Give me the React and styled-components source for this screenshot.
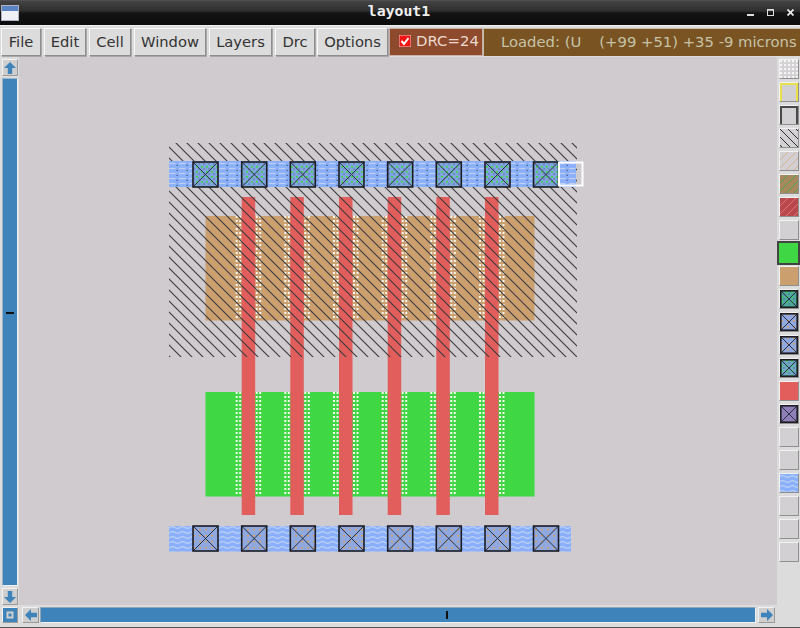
import React from "react";
import styled, { createGlobalStyle } from "styled-components";

const Global = createGlobalStyle`
  html, body { margin: 0; padding: 0; background: #dcdcdc; overflow: hidden; }
  #root { width: 800px; height: 628px; }
`;

const Win = styled.div`
  width: 800px; height: 628px; display: flex; flex-direction: column;
  background: #dcdcdc; font-family: "DejaVu Sans", sans-serif; overflow: hidden;
`;
const TitleBar = styled.div`
  height: 26px; flex: none; display: flex; align-items: center; position: relative;
  background: linear-gradient(#5a5a5a 0, #444 1px, #2e2e2e 11px, #141414 13px, #0c0c0c 25px, #f0f0f0 25px);
  padding-bottom: 1px; box-sizing: border-box;
`;
const AppIcon = styled.svg`width: 18px; height: 16px; margin-left: 1px; flex: none;`;
const TitleText = styled.div`
  position: absolute; left: 0; right: 2px; top: 2px; text-align: center; color: #efefef;
  font: bold 14.8px "DejaVu Sans Mono", monospace;
`;
const WinButtons = styled.div`
  margin-left: auto; display: flex; align-items: center; gap: 13px; padding-right: 6px;
`;
const WinIcon = styled.svg`width: 7px; height: 7px; display: block;`;
const MenuBar = styled.div`
  height: 31px; flex: none; display: flex; align-items: stretch; box-sizing: border-box;
  padding: 2px 0 1px 1px; background: #dcdcdc;
`;
const MenuButton = styled.div`
  width: ${p => p.$w}px; margin-right: ${p => p.$gap}px; box-sizing: border-box; padding-bottom: 2px;
  display: flex; align-items: center; justify-content: center;
  background: #dcdcdc; color: #333; font-size: 14.7px; white-space: pre;
  border: 1px solid; border-color: #f8f8f8 #8e8e8e #8e8e8e #f8f8f8;
  box-shadow: 1px 1px 0 #a8a8a8;
`;
const DrcBox = styled.div`
  width: 94px; margin-left: 1px; box-sizing: border-box; display: flex; align-items: center; padding: 0 0 2px 9px; gap: 5px;
  background: #8d4a2d; color: #ecd9cf; font-size: 14.9px; border: 1px solid #c9b0a6;
`;
const Check = styled.svg`width: 12px; height: 12px; flex: none;`;
const StatusBox = styled.div`
  flex: 1; box-sizing: border-box; display: flex; align-items: center; padding: 0 0 2px 17px;
  background: #7a5323; color: #c6c3a8; font-size: 14.8px; white-space: pre; border-top: 1px solid #c7bca8; border-left: 1px solid #c7bca8;
`;
const StatusGap = styled.span`width: 18px; flex: none;`;
const Main = styled.div`flex: 1; display: flex; min-height: 0;`;
const VScroll = styled.div`
  width: 19px; flex: none; display: flex; flex-direction: column; align-items: center; padding: 2px 0 0; box-sizing: border-box; gap: 2px; background: #dcdcdc;
`;
const ArrowBtn = styled.div`
  width: 16px; height: 17px; flex: none; background: #cfcfcf; display: flex; align-items: center; justify-content: center;
  border: 1px solid; border-color: #f2f2f2 #9a9a9a #9a9a9a #f2f2f2; box-sizing: border-box;
`;
const ArrowSvg = styled.svg`width: 14px; height: 14px; display: block;`;
const VTrough = styled.div`
  width: 16px; flex: 1; background: #3e83ba; position: relative; border: 1px solid; border-color: #9ab6cc #f0f0f0 #f0f0f0 #9ab6cc; box-sizing: border-box;
`;
const VMark = styled.div`position: absolute; left: 3px; right: 3px; top: 233px; height: 2px; background: #111;`;
const Canvas = styled.div`flex: 1; background: #cfcbcf; min-width: 0;`;
const CanvasSvg = styled.svg`display: block; width: 758px; height: 548px;`;
const ToolCol = styled.div`
  width: 23px; flex: none; display: flex; flex-direction: column; align-items: center; padding-top: 2px; gap: 3px; background: #dcdcdc; box-sizing: border-box;
`;
const Swatch = styled.div`
  width: ${p => p.$sel ? 23 : 20}px; height: ${p => p.$sel ? 24 : 20}px; flex: none; box-sizing: border-box;
  margin: ${p => p.$sel ? "-2px 0" : "0"};
  background: #d2d0d2; border: ${p => p.$sel ? "2px solid #444" : "1px solid"};
  border-color: ${p => p.$sel ? "#444" : "#f2f2f2 #8f8f8f #8f8f8f #f2f2f2"};
  z-index: ${p => p.$sel ? 1 : 0};
`;
const SwatchSvg = styled.svg`display: block; width: 100%; height: 100%;`;
const BottomBar = styled.div`
  height: 23px; flex: none; display: flex; align-items: center; padding: 1px 0 3px 2px; box-sizing: border-box; background: #dcdcdc; border-bottom: 1px solid #555;
`;
const CornerBtn = styled(ArrowBtn)`width: 16px; height: 16px; margin-right: 4px;`;
const HArrow = styled(ArrowBtn)`width: 17px; height: 16px;`;
const HTrough = styled.div`
  width: 716px; height: 16px; margin: 0 2px 0 1px; box-sizing: border-box; background: #3e83ba; position: relative;
  border: 1px solid; border-color: #8fa6b8 #f0f0f0 #f0f0f0 #8fa6b8;
`;
const HMark = styled.div`position: absolute; left: 405px; top: 3px; bottom: 3px; width: 2px; background: #111;`;

const Arrow = ({ dir }) => {
  const rot = { up: 0, right: 90, down: 180, left: 270 }[dir];
  return (
    <ArrowSvg viewBox="0 0 14 14">
      <path d="M7 1 L13 7 H9.2 V13 H4.8 V7 H1 Z" fill="#3e83ba" transform={`rotate(${rot} 7 7)`} />
    </ArrowSvg>
  );
};

const XS = [193, 241.7, 290.3, 339, 387.7, 436.3, 485, 533.5];
const BARS = XS.slice(1, 7);

const Contact = ({ x, y, s = 25, dots, fill = "#8fa9e0", sw = 1.6 }) => (
  <g>
    <rect x={x} y={y} width={s} height={s} fill={fill} />
    {dots && <rect x={x} y={y} width={s} height={s} fill={`url(#${dots})`} />}
    <path d={`M${x} ${y}L${x + s} ${y + s}M${x + s} ${y}L${x} ${y + s}`} stroke="#2a3040" strokeWidth="1" />
    <rect x={x} y={y} width={s} height={s} fill="none" stroke="#1c1c22" strokeWidth={sw} />
  </g>
);

const DotColumn = ({ x, y }) => (
  <line x1={x} x2={x} y1={y} y2={y + 104} stroke="#f6f6ee" strokeWidth="2" strokeDasharray="2 2" />
);

const Defs = () => (
  <defs>
    <pattern id="hatch" width="11" height="11" patternUnits="userSpaceOnUse">
      <path d="M-1 -1 L12 12 M-1 10 L1 12 M10 -1 L12 1" stroke="#3a3a3e" strokeWidth="1.100" fill="none" />
    </pattern>
    <pattern id="fhatch" width="8" height="8" patternUnits="userSpaceOnUse">
      <path d="M-1 -1 L9 9 M-1 7 L1 9 M7 -1 L9 1" stroke="#2e2e30" strokeWidth="1" fill="none" />
    </pattern>
    <pattern id="tanhatch" width="8" height="8" patternUnits="userSpaceOnUse">
      <path d="M9 -1 L-1 9 M1 -1 L-1 1 M9 7 L7 9" stroke="#d9b596" strokeWidth="1" fill="none" />
    </pattern>
    <pattern id="greenhatch" width="8" height="8" patternUnits="userSpaceOnUse">
      <path d="M9 -1 L-1 9 M1 -1 L-1 1 M9 7 L7 9" stroke="#4fa44a" strokeWidth="1" fill="none" />
    </pattern>
    <pattern id="redhatch" width="8" height="8" patternUnits="userSpaceOnUse">
      <path d="M9 -1 L-1 9 M1 -1 L-1 1 M9 7 L7 9" stroke="#e0736f" strokeWidth="1" fill="none" />
    </pattern>
    <pattern id="wave" width="10" height="5" patternUnits="userSpaceOnUse">
      <path d="M0 2.500 Q2.500 0.800 5 2.500 T10 2.500" stroke="#bcd0f4" strokeWidth="1.100" fill="none" />
    </pattern>
    <pattern id="dashes" width="10" height="5" patternUnits="userSpaceOnUse" x="169" y="161">
      <path d="M0 2.500 H6.500" stroke="#c3cfea" strokeWidth="1.200" />
      <rect x="7.500" y="3.800" width="1.300" height="1.200" fill="#4a5678" />
    </pattern>
    <pattern id="greendots" width="5" height="5" patternUnits="userSpaceOnUse">
      <rect x="1" y="1" width="2" height="1.600" fill="#3fd844" />
      <rect x="3.500" y="3.500" width="1" height="1" fill="#46505e" />
    </pattern>
    <pattern id="orangedots" width="6" height="6" patternUnits="userSpaceOnUse">
      <rect x="1" y="1" width="2" height="1.400" fill="#d8a05e" />
    </pattern>
    <pattern id="icondots" width="4" height="4" patternUnits="userSpaceOnUse">
      <rect width="2.200" height="2.200" fill="#f4f4f4" />
    </pattern>
  </defs>
);

const Layout = () => (
  <CanvasSvg viewBox="19 57 758 548">
    <Defs />
    <rect x="205.500" y="216" width="329" height="104.500" fill="#cb9f6e" />
    <rect x="205.500" y="392" width="329" height="104.500" fill="#3fd844" />
    <rect x="169" y="526" width="402" height="25.500" fill="#8ab0fb" />
    <rect x="169" y="526" width="402" height="25.500" fill="url(#wave)" />
    {BARS.map(x => (
      <g key={x}>
        {[216, 392].map(y => (
          <g key={y}>
            <DotColumn x={x - 5} y={y} />
            <DotColumn x={x - 1.500} y={y} />
            <DotColumn x={x + 15} y={y} />
            <DotColumn x={x + 18.500} y={y} />
          </g>
        ))}
        <rect x={x} y="197" width="13.500" height="318" fill="#e25e5c" />
      </g>
    ))}
    <rect x="169" y="143" width="408" height="214" fill="url(#hatch)" />
    <rect x="169" y="161" width="407" height="26" fill="#8ab0fb" />
    <rect x="169" y="161" width="407" height="26" fill="url(#dashes)" />
    {XS.map(x => <Contact key={x} x={x} y={162} fill="#7fa5e0" dots="greendots" />)}
    {XS.map(x => <Contact key={x} x={x} y={526} dots="orangedots" />)}
    <rect x="559" y="162.500" width="23.500" height="23" fill="none" stroke="#fff" strokeWidth="2" />
  </CanvasSvg>
);

const SWATCHES = [
  { fill: "url(#icondots)" },
  { stroke: "#e8e04a" },
  { stroke: "#4a4a4a" },
  { fill: "url(#fhatch)" },
  { fill: "url(#tanhatch)" },
  { bg: "#a8885f", fill: "url(#greenhatch)" },
  { bg: "#b9484e", fill: "url(#redhatch)" },
  {},
  { sel: true, bg: "#3fd844" },
  { bg: "#cb9f6e" },
  { contact: "#4ea7a0", dots: "greendots" },
  { contact: "#8fa9e0", dots: "orangedots" },
  { contact: "#8fa9e0", dots: "orangedots" },
  { contact: "#6fa7c8", dots: "greendots" },
  { bg: "#e25e5c" },
  { contact: "#8f7fb8" },
  {},
  {},
  { bg: "#8ab0fb", fill: "url(#wave)" },
  {},
  {},
  {},
];

const SwatchIcon = ({ s }) => (
  <SwatchSvg viewBox="0 0 18 18" preserveAspectRatio="none">
    {s.bg && <rect width="18" height="18" fill={s.bg} />}
    {s.fill && <rect width="18" height="18" fill={s.fill} />}
    {s.stroke && <path d="M1 18 V1 H17 V18" fill="none" stroke={s.stroke} strokeWidth="2" />}
    {s.contact && <Contact x={0.8} y={0.8} s={16.4} fill={s.contact} dots={s.dots} sw={1.6} />}
  </SwatchSvg>
);

export default function App() {
  return (
    <Win>
      <Global />
      <TitleBar>
        <AppIcon viewBox="0 0 18 16">
          <rect x="0.5" y="0.5" width="17" height="15" fill="#eef0f6" stroke="#aeb4c4" />
          <rect x="1" y="1" width="16" height="5" fill="#5b84c2" />
        </AppIcon>
        <TitleText>layout1</TitleText>
        <WinButtons>
          <WinIcon viewBox="0 0 7 7"><path d="M0 6H7" stroke="#ddd" strokeWidth="2" /></WinIcon>
          <WinIcon viewBox="0 0 7 7"><rect x=".5" y=".5" width="6" height="6" fill="none" stroke="#ddd" /><path d="M0 1H7" stroke="#ddd" strokeWidth="1.500" /></WinIcon>
          <WinIcon viewBox="0 0 7 7"><path d="M.5.5L6.500 6.500M6.500.5L.5 6.500" stroke="#eee" strokeWidth="1.700" /></WinIcon>
        </WinButtons>
      </TitleBar>
      <MenuBar>
        <MenuButton $w={40} $gap={3}>File</MenuButton>
        <MenuButton $w={42} $gap={3}>Edit</MenuButton>
        <MenuButton $w={42} $gap={3}>Cell</MenuButton>
        <MenuButton $w={72} $gap={3}>Window</MenuButton>
        <MenuButton $w={63} $gap={3}>Layers</MenuButton>
        <MenuButton $w={40} $gap={2}>Drc</MenuButton>
        <MenuButton $w={71} $gap={0}>Options</MenuButton>
        <DrcBox>
          <Check viewBox="0 0 12 12">
            <rect width="12" height="12" fill="#f01414" stroke="#e8c8c8" />
            <path d="M2.500 6 L5 9 L9.500 3" fill="none" stroke="#fff" strokeWidth="2" />
          </Check>
          DRC=24
        </DrcBox>
        <StatusBox>Loaded: (U<StatusGap />(+99 +51) +35 -9 microns</StatusBox>
      </MenuBar>
      <Main>
        <VScroll>
          <ArrowBtn><Arrow dir="up" /></ArrowBtn>
          <VTrough><VMark /></VTrough>
          <ArrowBtn><Arrow dir="down" /></ArrowBtn>
        </VScroll>
        <Canvas><Layout /></Canvas>
        <ToolCol>
          {SWATCHES.map((s, i) => (
            <Swatch key={i} $sel={s.sel}><SwatchIcon s={s} /></Swatch>
          ))}
        </ToolCol>
      </Main>
      <BottomBar>
        <CornerBtn>
          <ArrowSvg viewBox="0 0 14 14">
            <path d="M0 0H14V14H0Z M3.500 3.500V10.500H10.500V3.500Z" fill="#3e83ba" fillRule="evenodd" />
            <rect x="5.500" y="5.500" width="3" height="3" fill="#3e83ba" />
          </ArrowSvg>
        </CornerBtn>
        <HArrow><Arrow dir="left" /></HArrow>
        <HTrough><HMark /></HTrough>
        <HArrow><Arrow dir="right" /></HArrow>
      </BottomBar>
    </Win>
  );
}
